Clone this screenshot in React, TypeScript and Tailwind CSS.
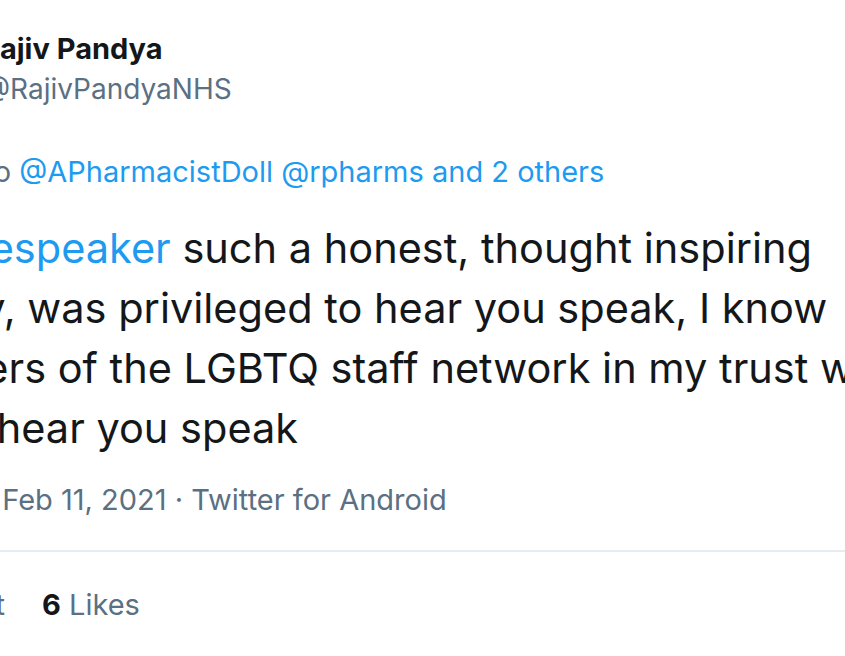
import React from "react";

export default function App() {
  const font = { fontFamily: "Inter, 'Noto Sans', sans-serif" };
  return (
    <div className="w-[845px] h-[656px] overflow-hidden bg-white text-[#14171a]" style={font}>
      <div className="flex flex-col pt-[29px]">
        <div className="-ml-[19px] whitespace-nowrap text-[29px] leading-[40px] font-bold text-[#14171a]">Rajiv Pandya</div>
        <div className="-ml-[17px] whitespace-nowrap text-[28px] leading-[40px] text-[#5b7083]">@RajivPandyaNHS</div>
        <div className="mt-[43px] -ml-[142px] whitespace-nowrap text-[29px] leading-[40px] text-[#5b7083]">
          Replying to <span className="text-[#1d9bf0]">@APharmacistDoll @rpharms and 2 others</span>
        </div>
        <div className="mt-[26px] flex flex-col text-[41.5px] leading-[60px] whitespace-nowrap">
          <div className="-ml-[147px]"><span className="text-[#1d9bf0]">@thelifespeaker</span> such a honest, thought inspiring</div>
          <div className="-ml-[94px]">story, was privileged to hear you speak, I know</div>
          <div className="-ml-[138px]">members of the LGBTQ staff network in my trust would</div>
          <div className="-ml-[53px]">to hear you speak</div>
        </div>
        <div className="mt-[22px] -ml-[145px] whitespace-nowrap text-[29px] leading-[40px] text-[#5b7083]">
          11:03 AM · Feb 11, 2021 · Twitter for Android
        </div>
        <div className="mt-[30px] h-[2px] bg-[#e6ecf0]" />
        <div className="mt-[33px] whitespace-nowrap text-[29px] leading-[40px] flex gap-[37px]">
          <div className="w-[5px] flex justify-end">
            <span className="whitespace-nowrap"><span className="font-bold text-[#14171a]">1</span> <span className="text-[#5b7083]">Retweet</span></span>
          </div>
          <span><span className="font-bold text-[#14171a]">6</span> <span className="text-[#5b7083]">Likes</span></span>
        </div>
      </div>
    </div>
  );
}
